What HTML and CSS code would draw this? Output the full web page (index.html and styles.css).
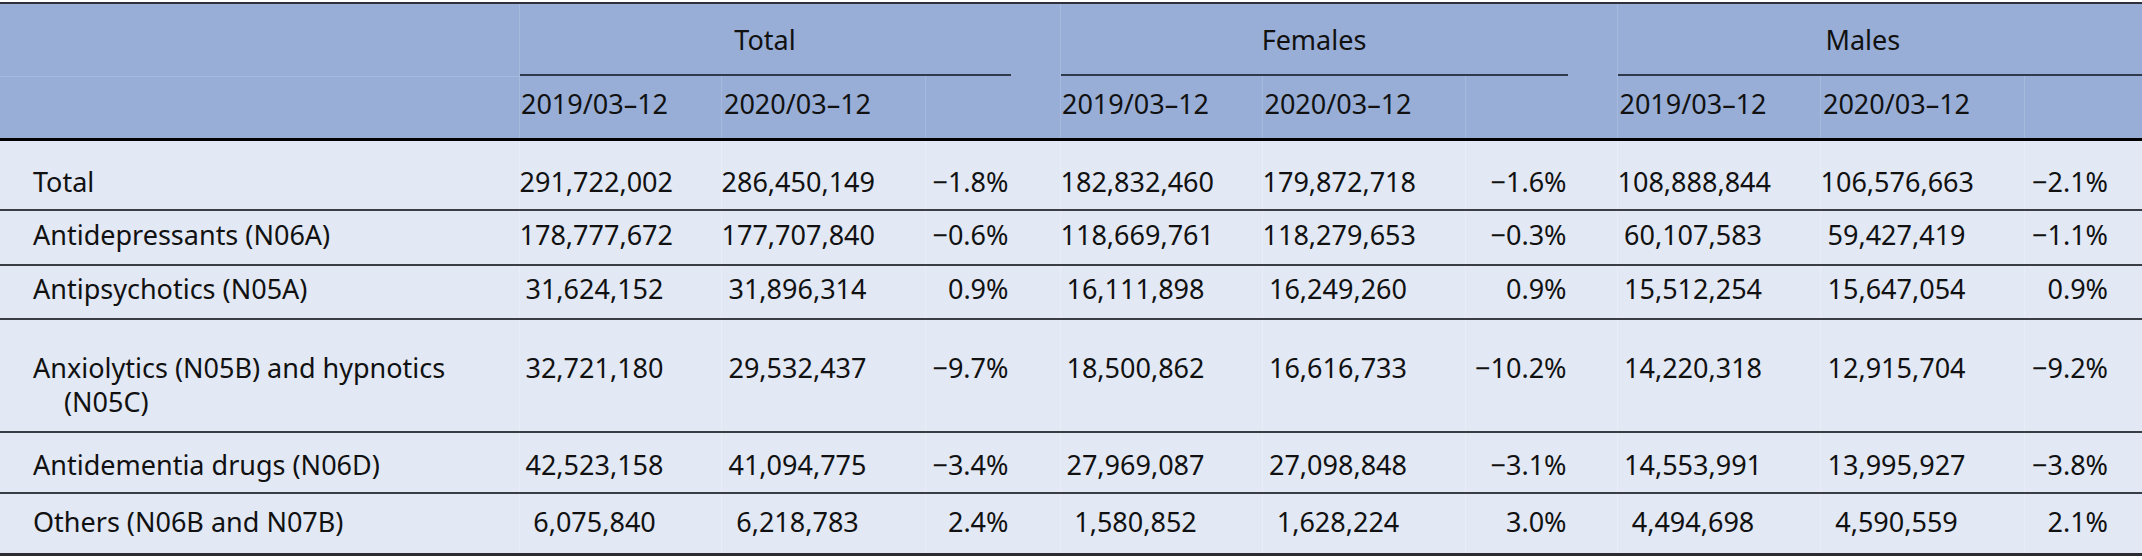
FILE: index.html
```html
<!DOCTYPE html>
<html lang="en">
<head>
<meta charset="utf-8">
<title>Table</title>
<link rel="stylesheet" href="styles.css">
</head>
<body>
<table class="data">
  <colgroup>
    <col class="w-label">
    <col class="w-202"><col class="w-204"><col class="w-135">
    <col class="w-202"><col class="w-203"><col class="w-152">
    <col class="w-203"><col class="w-204"><col class="w-118">
  </colgroup>
  <thead>
    <tr class="h1">
      <th class="lab"></th>
      <th colspan="3" class="grp"><div class="gbox gap">Total</div></th>
      <th colspan="3" class="grp"><div class="gbox gap">Females</div></th>
      <th colspan="3" class="grp"><div class="gbox last">Males</div></th>
    </tr>
    <tr class="h2">
      <th class="lab"></th>
      <th class="num">2019/03–12</th><th class="num">2020/03–12</th><th class="pct pt"></th>
      <th class="num">2019/03–12</th><th class="num">2020/03–12</th><th class="pct pf"></th>
      <th class="num">2019/03–12</th><th class="num">2020/03–12</th><th class="pct pm"></th>
    </tr>
  </thead>
  <tbody>
    <tr class="r1">
      <td class="lab">Total</td>
      <td class="num">291,722,002</td><td class="num">286,450,149</td><td class="pct pt">−1.8%</td>
      <td class="num">182,832,460</td><td class="num">179,872,718</td><td class="pct pf">−1.6%</td>
      <td class="num">108,888,844</td><td class="num">106,576,663</td><td class="pct pm">−2.1%</td>
    </tr>
    <tr class="r2">
      <td class="lab">Antidepressants (N06A)</td>
      <td class="num">178,777,672</td><td class="num">177,707,840</td><td class="pct pt">−0.6%</td>
      <td class="num">118,669,761</td><td class="num">118,279,653</td><td class="pct pf">−0.3%</td>
      <td class="num">60,107,583</td><td class="num">59,427,419</td><td class="pct pm">−1.1%</td>
    </tr>
    <tr class="r3">
      <td class="lab">Antipsychotics (N05A)</td>
      <td class="num">31,624,152</td><td class="num">31,896,314</td><td class="pct pt">0.9%</td>
      <td class="num">16,111,898</td><td class="num">16,249,260</td><td class="pct pf">0.9%</td>
      <td class="num">15,512,254</td><td class="num">15,647,054</td><td class="pct pm">0.9%</td>
    </tr>
    <tr class="r4">
      <td class="lab hang">Anxiolytics (N05B) and hypnotics (N05C)</td>
      <td class="num">32,721,180</td><td class="num">29,532,437</td><td class="pct pt">−9.7%</td>
      <td class="num">18,500,862</td><td class="num">16,616,733</td><td class="pct pf">−10.2%</td>
      <td class="num">14,220,318</td><td class="num">12,915,704</td><td class="pct pm">−9.2%</td>
    </tr>
    <tr class="r5">
      <td class="lab">Antidementia drugs (N06D)</td>
      <td class="num">42,523,158</td><td class="num">41,094,775</td><td class="pct pt">−3.4%</td>
      <td class="num">27,969,087</td><td class="num">27,098,848</td><td class="pct pf">−3.1%</td>
      <td class="num">14,553,991</td><td class="num">13,995,927</td><td class="pct pm">−3.8%</td>
    </tr>
    <tr class="r6">
      <td class="lab">Others (N06B and N07B)</td>
      <td class="num">6,075,840</td><td class="num">6,218,783</td><td class="pct pt">2.4%</td>
      <td class="num">1,580,852</td><td class="num">1,628,224</td><td class="pct pf">3.0%</td>
      <td class="num">4,494,698</td><td class="num">4,590,559</td><td class="pct pm">2.1%</td>
    </tr>
  </tbody>
</table>
</body>
</html>
```
FILE: styles.css
```css
html, body {
  margin: 0;
  padding: 0;
  background: #ffffff;
}

body {
  font-family: "Noto Sans", "Open Sans", sans-serif;
  font-size: 27px;
  line-height: 34px;
  color: #111111;
}

.data {
  width: 2142px;
  table-layout: fixed;
  border-collapse: collapse;
  border-spacing: 0;
  margin-top: 2px;
  border-top: 2px solid #2e3138;
}

.w-label { width: 519px; }
.w-202 { width: 202px; }
.w-203 { width: 203px; }
.w-204 { width: 204px; }
.w-135 { width: 135px; }
.w-152 { width: 152px; }
.w-118 { width: 118px; }

th, td {
  padding: 0;
  font-weight: 400;
  white-space: nowrap;
}

thead th {
  background: #98aed6;
  border-left: 1px solid #a6bade;
}

thead th.lab {
  border-left: 0;
}

tbody td {
  background: #e2e8f4;
  border-left: 1px solid #e8edf7;
  border-bottom: 2px solid #3a3d44;
  vertical-align: top;
  padding-bottom: 12px;
}

tbody td.lab {
  border-left: 0;
}

.h1 th {
  vertical-align: bottom;
  border-bottom: 1px solid #a6bade;
}

.h1 th.grp {
  border-bottom: 0;
}

.gbox {
  text-align: center;
  padding-top: 19px;
  padding-bottom: 17px;
  border-bottom: 2px solid #2f3a4a;
}

.gbox.gap {
  margin-right: 49px;
}

.gbox.last {
  padding-right: 34px;
}

.h2 th {
  padding-top: 11px;
  padding-bottom: 17px;
  border-bottom: 3px solid #000000;
}

.lab {
  text-align: left;
  padding-left: 33px;
}

.hang {
  white-space: normal;
  padding-left: 64px;
  text-indent: -31px;
  padding-right: 20px;
}

.num {
  text-align: center;
  padding-right: 51px;
}

.pct {
  text-align: right;
}

.pt { padding-right: 51px; }
.pf { padding-right: 50px; }
.pm { padding-right: 34px; }

.r1 td { padding-top: 24px; padding-bottom: 10px; }
.r2 td { padding-top: 7px; }
.r3 td { padding-top: 6px; }
.r4 td { padding-top: 31px; }
.r5 td { padding-top: 15px; padding-bottom: 10px; }
.r6 td { padding-top: 11px; padding-bottom: 14px; border-bottom: 3px solid #2a2c31; }
```
